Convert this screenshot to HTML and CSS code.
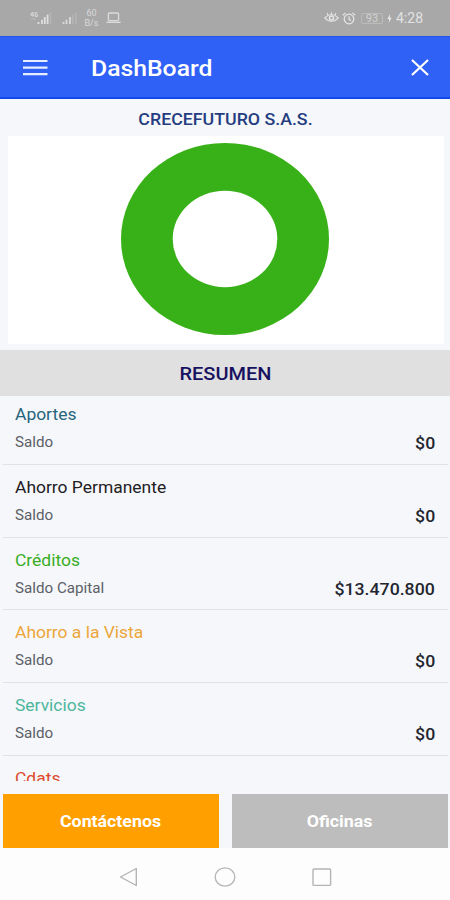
FILE: index.html
```
<!DOCTYPE html>
<html lang="es">
<head>
    <meta charset="UTF-8">
    <meta name="viewport" content="width=device-width, initial-scale=1.0">
    <title>DashBoard</title>
    <link rel="stylesheet" href="styles.css">
</head>
<body>
    <div class="phone">
        <div class="status-bar">
            <div class="status-left">
                <svg class="signal-4g" width="22" height="14" viewBox="0 0 22 14">
                    <path d="M2.5 1 L.8 4.2 H3.6 M3 1 V5.8 M7.4 1.8 H5.2 V5.4 H7.4 V3.6 H6.4" fill="none" stroke="#dadada" stroke-width="1"/>
                    <path d="M1 8 H6" stroke="#bcbcbc"/>
                    <path d="M8.5 11 V13 M12 8.8 V13 M14.8 6 V13 M17.6 3.5 V13" stroke="#dedede" stroke-width="1.8"/>
                    <path d="M20.5 1.5 V13" stroke="#b5b5b5" stroke-width="1.6"/>
                </svg>
                <svg class="signal" width="15" height="14" viewBox="0 0 15 14">
                    <path d="M1.5 11 V13 M4.5 8.8 V13 M8 6 V13" stroke="#dadada" stroke-width="1.8"/>
                    <path d="M10.8 3.5 V13 M14 1.5 V13" stroke="#b5b5b5" stroke-width="1.6"/>
                </svg>
                <div class="speed"><span>60</span><span>B/s</span></div>
                <svg class="laptop" width="15" height="12" viewBox="0 0 15 12">
                    <rect x="2.4" y="1" width="10.2" height="7.6" rx="1" fill="none" stroke="#dcdcdc" stroke-width="1.3"/>
                    <path d="M.4 10.3 H14.6" stroke="#dcdcdc" stroke-width="1.4"/>
                </svg>
            </div>
            <div class="status-right">
                <svg width="15" height="12" viewBox="0 0 15 12">
                    <path d="M.7 6 Q7.5 -1 14.3 6 Q7.5 13 .7 6Z M7.5 .2 V2.5 M3 1 L4 3 M12 1 L11 3" fill="none" stroke="#e0e0e0" stroke-width="1.2"/>
                    <circle cx="7.5" cy="6" r="2" fill="none" stroke="#e6e6e6" stroke-width="1.5"/>
                </svg>
                <svg class="alarm" width="14" height="13" viewBox="0 0 14 13">
                    <circle cx="7" cy="7" r="4.8" fill="none" stroke="#e4e4e4" stroke-width="1.3"/>
                    <path d="M.8 3.2 L3.6 .9 M13.2 3.2 L10.4 .9 M7 4.3 V7.3 L9 8.4" fill="none" stroke="#e4e4e4" stroke-width="1.2"/>
                </svg>
                <div class="battery">93</div>
                <svg class="bolt" width="5" height="9" viewBox="0 0 5 9">
                    <path d="M3 0 L.4 5 H2.2 L1.8 9 L4.6 3.8 H2.8Z" fill="#e8e8e8"/>
                </svg>
                <span class="time">4:28</span>
            </div>
        </div>

        <div class="navbar">
            <svg class="menu" width="25" height="17" viewBox="0 0 25 17">
                <path d="M0 2 H24.5 M0 8.7 H24.5 M0 15.2 H24.5" stroke="#e6edff" stroke-width="2.2"/>
            </svg>
            <h1 class="title">DashBoard</h1>
            <svg class="close" width="18" height="17" viewBox="0 0 18 17">
                <path d="M1 1 L17 16 M17 1 L1 16" stroke="#fff" stroke-width="2.2"/>
            </svg>
        </div>

        <div class="company"><span>CRECEFUTURO S.A.S.</span></div>
        <div class="chart">
            <svg width="208" height="192" viewBox="0 0 208 192">
                <ellipse cx="104" cy="96" rx="104" ry="96" fill="#37b117"/>
                <ellipse cx="104" cy="96" rx="52.3" ry="48.2" fill="#fff"/>
            </svg>
        </div>
        <div class="summary"><span>RESUMEN</span></div>

        <div class="list">
            <div class="row">
                <div class="name aportes">Aportes</div>
                <div class="line"><span class="label">Saldo</span><span class="value">$0</span></div>
            </div>
            <div class="row">
                <div class="name permanente">Ahorro Permanente</div>
                <div class="line"><span class="label">Saldo</span><span class="value">$0</span></div>
            </div>
            <div class="row">
                <div class="name creditos">Créditos</div>
                <div class="line"><span class="label">Saldo Capital</span><span class="value">$13.470.800</span></div>
            </div>
            <div class="row">
                <div class="name vista">Ahorro a la Vista</div>
                <div class="line"><span class="label">Saldo</span><span class="value">$0</span></div>
            </div>
            <div class="row">
                <div class="name servicios">Servicios</div>
                <div class="line"><span class="label">Saldo</span><span class="value">$0</span></div>
            </div>
            <div class="row">
                <div class="name cdats">Cdats</div>
            </div>
        </div>

        <div class="buttons">
            <button class="btn contact"><span>Contáctenos</span></button>
            <button class="btn offices"><span>Oficinas</span></button>
        </div>

        <div class="system-nav">
            <svg width="19" height="20" viewBox="0 0 19 20">
                <path d="M17.3 1.5 V18.5 L1.5 10Z" fill="none" stroke="#b4b4b4" stroke-width="1.4" stroke-linejoin="round"/>
            </svg>
            <svg width="22" height="20" viewBox="0 0 22 20">
                <ellipse cx="11" cy="10" rx="9.8" ry="9.1" fill="none" stroke="#b4b4b4" stroke-width="1.3"/>
            </svg>
            <svg width="20" height="19" viewBox="0 0 20 19">
                <rect x="1" y="1" width="17.6" height="16.4" rx="1" fill="none" stroke="#b4b4b4" stroke-width="1.4"/>
            </svg>
        </div>
    </div>
</body>
</html>
```
FILE: styles.css
```
*{
    box-sizing: border-box;
}
body{
    margin: 0;
    font-family: Roboto, "Liberation Sans", sans-serif;
}
svg{
    display: block;
    flex: none;
}
.phone{
    width: 450px;
    height: 900px;
    display: flex;
    flex-direction: column;
    overflow: hidden;
    background-color: #f5f7fb;
}
.status-bar{
    height: 36px;
    flex: none;
    display: flex;
    justify-content: space-between;
    padding: 0 26px 0 30px;
    background-color: #a8a8a8;
    color: #e2e2e2;
}
.status-left, .status-right{
    display: flex;
    align-items: center;
}
.signal{
    margin-left: 10px;
}
.speed{
    display: flex;
    flex-direction: column;
    align-items: center;
    width: 15px;
    margin-left: 7px;
    font-size: 9px;
    line-height: 10px;
    color: #dadada;
}
.laptop{
    margin-left: 7px;
}
.alarm{
    margin-left: 3px;
}
.battery{
    width: 22px;
    height: 11px;
    margin-left: 5px;
    border: 1px solid #bcbcbc;
    border-radius: 2px;
    font-size: 11px;
    line-height: 9px;
    text-align: center;
    color: #d2d2d2;
}
.bolt{
    margin-left: 4px;
}
.time{
    width: 28px;
    margin-left: 4px;
    font-size: 14px;
    white-space: nowrap;
}
.navbar{
    height: 63px;
    flex: none;
    display: flex;
    align-items: center;
    padding: 0 21px 0 23px;
    background-color: #3061f6;
    border-top: 1px solid #2355e8;
    border-bottom: 2px solid #1149ea;
}
.title{
    margin: 2px auto 0 42.5px;
    font-size: 22.5px;
    font-weight: 500;
    color: #fff;
    transform: scaleX(1.1);
    transform-origin: left;
}
.company{
    height: 37px;
    flex: none;
    padding-top: 11px;
    text-align: center;
    font-size: 16px;
    line-height: 20px;
    font-weight: 500;
    color: #253d80;
}
.company span, .summary span, .btn span{
    display: inline-block;
    transform: scaleX(1.11);
}
.chart{
    height: 208px;
    flex: none;
    margin: 0 6px 6px 8px;
    padding: 7px 0 0 113.4px;
    background-color: #fff;
}
.summary{
    height: 46px;
    flex: none;
    text-align: center;
    font-size: 18px;
    line-height: 48px;
    font-weight: 500;
    color: #17125f;
    background-color: #e0e0e0;
}
.list{
    height: 385px;
    flex: none;
    display: flex;
    flex-direction: column;
    justify-content: flex-start;
    overflow: hidden;
}
.row{
    height: 72.8px;
    flex: none;
    margin: 0 2px 0 3px;
    padding: 13px 13px 0 12px;
    border-bottom: 1px solid #e0e2e7;
}
.row:first-child{
    height: 68.8px;
    padding-top: 9px;
}
.name{
    font-size: 16px;
    line-height: 20px;
    transform: scaleX(1.09);
    transform-origin: left;
}
.line{
    display: flex;
    justify-content: space-between;
    margin-top: 7px;
    line-height: 20px;
}
.label{
    font-size: 14px;
    color: #5c5f66;
    transform: scaleX(1.083);
    transform-origin: left;
}
.value{
    margin-top: 2px;
    font-size: 16px;
    font-weight: 500;
    color: #23252e;
    transform: scaleX(1.105);
    transform-origin: right;
}
.aportes{
    color: #28647c;
}
.permanente{
    color: #1f2023;
}
.creditos{
    color: #37ad24;
}
.vista{
    color: #eda63a;
}
.servicios{
    color: #4db69c;
}
.cdats{
    color: #dc4a2c;
}
.buttons{
    height: 67px;
    flex: none;
    display: flex;
    gap: 13px;
    padding: 13px 2px 0 3px;
}
.btn{
    flex: 1;
    height: 54px;
    padding: 0;
    border: none;
    font-family: inherit;
    font-size: 16px;
    font-weight: 700;
    color: #fff;
}
.contact{
    background-color: #ffa000;
}
.offices{
    background-color: #bdbdbd;
}
.system-nav{
    flex: 1;
    display: flex;
    justify-content: center;
    align-items: center;
    gap: 76px;
    padding: 6px 0 0;
    background-color: #fdfdfd;
}
```
